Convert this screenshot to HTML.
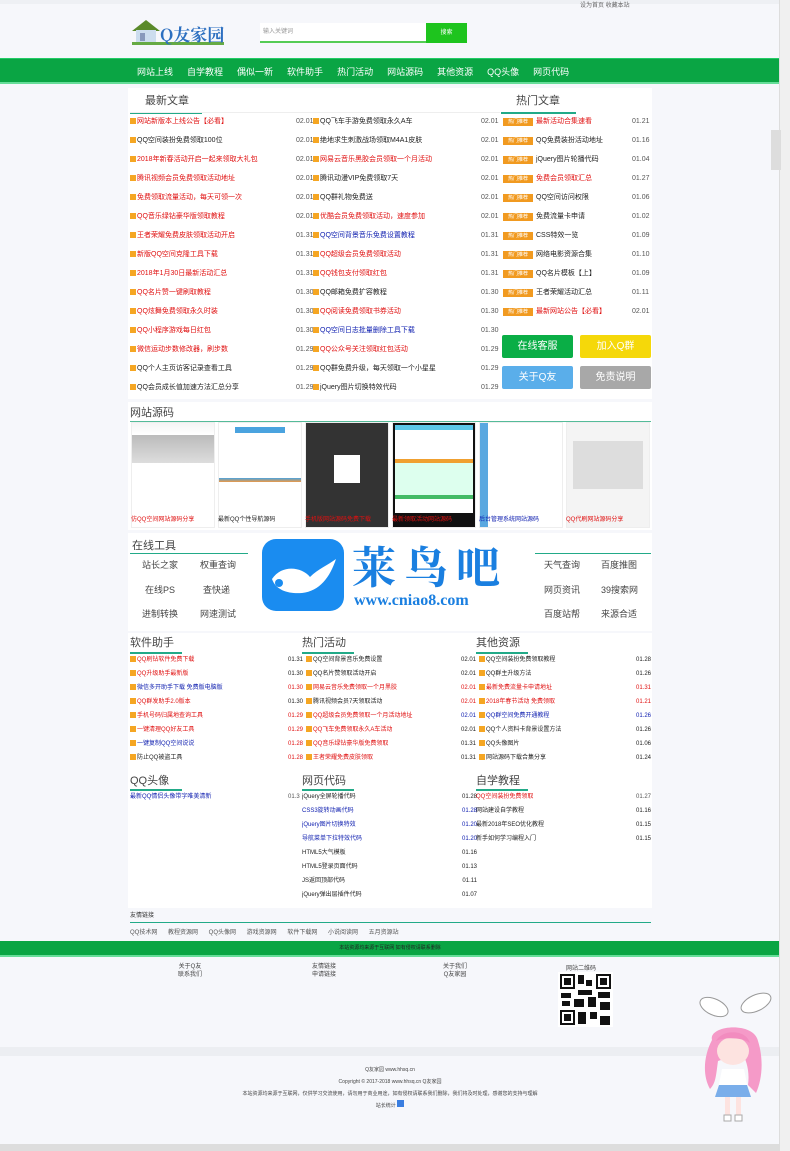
<!DOCTYPE html>
<html><head><meta charset="utf-8"><style>
*{margin:0;padding:0;box-sizing:border-box}
body{width:790px;height:1151px;background:#f6f7fb;font-family:"Liberation Sans","Noto Sans CJK SC",sans-serif;font-size:7px;color:#333;position:relative;overflow:hidden}
.a{position:absolute}
.nav{left:0;top:58px;width:780px;height:26px;background:#0aa544;border-top:1px solid #2c6;border-bottom:2px solid #6d9;white-space:nowrap}
.nav span{color:#fff;font-size:9px;display:inline-block;margin-left:14px;line-height:26px}
.box{background:#fff}
.ttl{font-size:11px;color:#444}
.ul{border-bottom:2px solid #2a8;width:70px}
.row{height:19px;line-height:19px;white-space:nowrap;overflow:hidden}
.r{color:#e01010}.b{color:#1020b0}.k{color:#222}
.ic{display:inline-block;width:6px;height:6px;background:#f5a623;margin-right:1px;vertical-align:-1px}
.dt{color:#555}
.tag{display:inline-block;background:#f19a20;color:#fff;width:30px;height:8px;line-height:8px;font-size:5px;text-align:center;vertical-align:0;margin-right:3px}
.sr{height:14px;line-height:14px;white-space:nowrap;overflow:hidden;font-size:6px}
.btn{color:#fff;font-size:10px;text-align:center;line-height:23px;border-radius:2px;width:71px;height:23px}
.thumb{top:422px;width:84px;height:106px;background:#fff;border:1px solid #eee}
.tool span{position:absolute;font-size:9px;color:#444;white-space:nowrap}
</style></head><body>
<div class="a" style="left:0;top:0;width:780px;height:4px;background:#eef0f4"></div>
<div class="a" style="left:130px;top:17px;width:98px;height:30px">
<svg width="98" height="30"><path d="M2 14 L16 3 L30 14 Z" fill="#5a8a2a"/><rect x="6" y="13" width="20" height="12" fill="#cde"/><rect x="10" y="16" width="5" height="8" fill="#89b"/><rect x="2" y="25" width="92" height="3" fill="#6a4"/></svg>
<span class="a" style="left:30px;top:4px;font-size:17px;color:#2c6fc0;font-weight:bold;font-family:'Noto Serif CJK SC',serif">Q友家园</span></div>
<div class="a" style="left:260px;top:23px;width:166px;height:20px;background:#fff;border-bottom:2px solid #5c5;font-size:6px;color:#999;line-height:18px;padding-left:3px">输入关键词</div>
<div class="a" style="left:426px;top:23px;width:41px;height:20px;background:#1ec41e;color:#fff;font-size:6px;text-align:center;line-height:20px">搜索</div>
<div class="a" style="left:580px;top:0;font-size:6px;color:#666">设为首页 收藏本站</div>
<div class="a nav"><span style="margin-left:137px">网站上线</span><span>自学教程</span><span>偶似一新</span><span>软件助手</span><span>热门活动</span><span>网站源码</span><span>其他资源</span><span>QQ头像</span><span>网页代码</span></div>
<div class="a box" style="left:128px;top:88px;width:524px;height:311px"></div>
<div class="a ttl" style="left:145px;top:92px">最新文章</div>
<div class="a ul" style="left:130px;top:112px;width:72px"></div>
<div class="a" style="left:130px;top:112px;width:370px;border-bottom:1px solid #eee"></div>
<div class="a" style="left:130px;top:112px;width:165px">
<div class="row r"><span class="ic"></span>网站新版本上线公告【必看】</div>
<div class="row k"><span class="ic"></span>QQ空间装扮免费领取100位</div>
<div class="row r"><span class="ic"></span>2018年新春活动开启一起来领取大礼包</div>
<div class="row r"><span class="ic"></span>腾讯视频会员免费领取活动地址</div>
<div class="row r"><span class="ic"></span>免费领取流量活动，每天可领一次</div>
<div class="row r"><span class="ic"></span>QQ音乐绿钻豪华版领取教程</div>
<div class="row r"><span class="ic"></span>王者荣耀免费皮肤领取活动开启</div>
<div class="row r"><span class="ic"></span>新版QQ空间克隆工具下载</div>
<div class="row r"><span class="ic"></span>2018年1月30日最新活动汇总</div>
<div class="row r"><span class="ic"></span>QQ名片赞一键刷取教程</div>
<div class="row r"><span class="ic"></span>QQ炫舞免费领取永久时装</div>
<div class="row r"><span class="ic"></span>QQ小程序游戏每日红包</div>
<div class="row r"><span class="ic"></span>微信运动步数修改器，刷步数</div>
<div class="row k"><span class="ic"></span>QQ个人主页访客记录查看工具</div>
<div class="row k"><span class="ic"></span>QQ会员成长值加速方法汇总分享</div></div>
<div class="a dt" style="left:296px;top:112px;line-height:19px">02.01<br>02.01<br>02.01<br>02.01<br>02.01<br>02.01<br>01.31<br>01.31<br>01.31<br>01.30<br>01.30<br>01.30<br>01.29<br>01.29<br>01.29</div>
<div class="a" style="left:313px;top:112px;width:165px">
<div class="row k"><span class="ic"></span>QQ飞车手游免费领取永久A车</div>
<div class="row k"><span class="ic"></span>绝地求生刺激战场领取M4A1皮肤</div>
<div class="row r"><span class="ic"></span>网易云音乐黑胶会员领取一个月活动</div>
<div class="row k"><span class="ic"></span>腾讯动漫VIP免费领取7天</div>
<div class="row k"><span class="ic"></span>QQ群礼物免费送</div>
<div class="row r"><span class="ic"></span>优酷会员免费领取活动，速度参加</div>
<div class="row b"><span class="ic"></span>QQ空间背景音乐免费设置教程</div>
<div class="row r"><span class="ic"></span>QQ超级会员免费领取活动</div>
<div class="row r"><span class="ic"></span>QQ钱包支付领取红包</div>
<div class="row k"><span class="ic"></span>QQ邮箱免费扩容教程</div>
<div class="row r"><span class="ic"></span>QQ阅读免费领取书券活动</div>
<div class="row b"><span class="ic"></span>QQ空间日志批量删除工具下载</div>
<div class="row r"><span class="ic"></span>QQ公众号关注领取红包活动</div>
<div class="row k"><span class="ic"></span>QQ群免费升级，每天领取一个小星星</div>
<div class="row k"><span class="ic"></span>jQuery图片切换特效代码</div></div>
<div class="a dt" style="left:481px;top:112px;line-height:19px">02.01<br>02.01<br>02.01<br>02.01<br>02.01<br>02.01<br>01.31<br>01.31<br>01.31<br>01.30<br>01.30<br>01.30<br>01.29<br>01.29<br>01.29</div>
<div class="a ttl" style="left:516px;top:92px">热门文章</div>
<div class="a ul" style="left:501px;top:112px;width:75px"></div>
<div class="a" style="left:503px;top:112px;width:148px;line-height:19px">
<div class="row r"><span class="tag">热门推荐</span>最新活动合集速看</div>
<div class="row k"><span class="tag">热门推荐</span>QQ免费装扮活动地址</div>
<div class="row k"><span class="tag">热门推荐</span>jQuery图片轮播代码</div>
<div class="row r"><span class="tag">热门推荐</span>免费会员领取汇总</div>
<div class="row k"><span class="tag">热门推荐</span>QQ空间访问权限</div>
<div class="row k"><span class="tag">热门推荐</span>免费流量卡申请</div>
<div class="row k"><span class="tag">热门推荐</span>CSS特效一览</div>
<div class="row k"><span class="tag">热门推荐</span>网络电影资源合集</div>
<div class="row k"><span class="tag">热门推荐</span>QQ名片模板【上】</div>
<div class="row k"><span class="tag">热门推荐</span>王者荣耀活动汇总</div>
<div class="row r"><span class="tag">热门推荐</span>最新网站公告【必看】</div></div>
<div class="a" style="left:632px;top:112px;line-height:19px;color:#555">01.21<br>01.16<br>01.04<br>01.27<br>01.06<br>01.02<br>01.09<br>01.10<br>01.09<br>01.11<br>02.01</div>
<div class="a btn" style="left:502px;top:335px;background:#0aae46">在线客服</div>
<div class="a btn" style="left:580px;top:335px;background:#f5d80a">加入Q群</div>
<div class="a btn" style="left:502px;top:366px;background:#5aaeea">关于Q友</div>
<div class="a btn" style="left:580px;top:366px;background:#a8a8a8">免责说明</div>
<div class="a box" style="left:128px;top:402px;width:524px;height:128px"></div>
<div class="a ttl" style="left:130px;top:404px">网站源码</div>
<div class="a" style="left:130px;top:421px;width:521px;border-top:1px solid #5b9"></div>
<div class="a thumb" style="left:131px;background:linear-gradient(#f5f5f5 0,#fff 12px,#bbb 12px,#ddd 40px,#fff 40px)"></div>
<div class="a thumb" style="left:218px;background:linear-gradient(#fff 55px,#4aa3df 55px,#e94 59px,#fff 59px)"><div style="margin:4px 16px;height:6px;background:#4aa3df"></div></div>
<div class="a thumb" style="left:305px;background:#333"><div style="margin:32px 28px;height:28px;background:#fff"></div></div>
<div class="a thumb" style="left:392px;background:#111;padding:2px"><div style="height:88px;background:linear-gradient(#5cc8e8 0,#5cc8e8 5px,#fff 5px,#fff 34px,#f0a030 34px,#f0a030 38px,#dfe 38px,#dfe 70px,#4b6 70px,#4b6 74px,#fff 74px)"></div></div>
<div class="a thumb" style="left:479px;background:linear-gradient(90deg,#5aa8e0 0,#5aa8e0 8px,#fff 8px)"></div>
<div class="a thumb" style="left:566px;background:#f4f4f4"><div style="margin:18px 6px;height:48px;background:#ddd"></div></div>
<div class="a" style="left:131px;top:514px;width:520px;font-size:6px;white-space:nowrap"><span class="r" style="position:absolute;left:0">仿QQ空间网站源码分享</span><span class="k" style="position:absolute;left:87px">最新QQ个性导航源码</span><span class="r" style="position:absolute;left:174px">手机版网站源码免费下载</span><span class="r" style="position:absolute;left:261px">最新领取活动网站源码</span><span class="b" style="position:absolute;left:348px">后台管理系统网站源码</span><span class="r" style="position:absolute;left:435px">QQ代刷网站源码分享</span></div>
<div class="a box" style="left:128px;top:533px;width:524px;height:98px"></div>
<div class="a ttl" style="left:132px;top:537px">在线工具</div>
<div class="a" style="left:130px;top:553px;width:118px;border-top:1px solid #2a8"></div>
<div class="a" style="left:535px;top:553px;width:116px;border-top:1px solid #2a8"></div>
<div class="a tool" style="left:0;top:0;width:790px;height:700px"><span style="left:142px;top:558px">站长之家</span><span style="left:200px;top:558px">权重查询</span><span style="left:145px;top:583px">在线PS</span><span style="left:203px;top:583px">查快递</span><span style="left:142px;top:607px">进制转换</span><span style="left:200px;top:607px">网速测试</span><span style="left:544px;top:558px">天气查询</span><span style="left:601px;top:558px">百度推图</span><span style="left:544px;top:583px">网页资讯</span><span style="left:601px;top:583px">39搜索网</span><span style="left:544px;top:607px">百度站帮</span><span style="left:601px;top:607px">来源合适</span></div>
<div class="a" style="left:262px;top:539px;width:82px;height:72px;background:#1a8cf0;border-radius:14px"><svg width="82" height="72"><path d="M10 40 C20 25 40 28 48 38 C56 30 66 26 74 20 C68 38 58 52 40 54 C28 55 14 52 10 40 Z" fill="#fff"/><circle cx="17" cy="44" r="4" fill="#1a8cf0"/></svg></div>
<div class="a" style="left:352px;top:534px;font-size:44px;color:#1a7fe0;font-weight:bold;font-family:'Noto Serif CJK SC',serif;letter-spacing:8px;line-height:60px;white-space:nowrap">莱鸟吧</div>
<div class="a" style="left:354px;top:592px;font-size:16px;color:#1a7fe0;font-weight:bold;font-family:'Liberation Serif',serif">www.cniao8.com</div>
<div class="a box" style="left:128px;top:633px;width:524px;height:275px"></div>
<div class="a ttl" style="left:130px;top:634px">软件助手</div><div class="a ul" style="left:130px;top:652px;width:52px"></div>
<div class="a ttl" style="left:302px;top:634px">热门活动</div><div class="a ul" style="left:302px;top:652px;width:52px"></div>
<div class="a ttl" style="left:476px;top:634px">其他资源</div><div class="a ul" style="left:476px;top:652px;width:52px"></div>
<div class="a" style="left:130px;top:653px;width:150px">
<div class="sr r"><span class="ic"></span>QQ刷钻软件免费下载</div><div class="sr r"><span class="ic"></span>QQ升级助手最新版</div><div class="sr b"><span class="ic"></span>微信多开助手下载 免费版电脑版</div><div class="sr r"><span class="ic"></span>QQ群发助手2.0版本</div><div class="sr r"><span class="ic"></span>手机号码归属地查询工具</div><div class="sr r"><span class="ic"></span>一键清理QQ好友工具</div><div class="sr b"><span class="ic"></span>一键复制QQ空间说说</div><div class="sr k"><span class="ic"></span>防止QQ被盗工具</div></div>
<div class="a" style="left:288px;top:653px;width:180px;font-size:6px">
<div class="sr k">01.31<span class="ic" style="margin-left:3px"></span>QQ空间背景音乐免费设置</div><div class="sr k">01.30<span class="ic" style="margin-left:3px"></span>QQ名片赞领取活动开启</div><div class="sr r">01.30<span class="ic" style="margin-left:3px"></span>网易云音乐免费领取一个月黑胶</div><div class="sr k">01.30<span class="ic" style="margin-left:3px"></span>腾讯视频会员7天领取活动</div><div class="sr r">01.29<span class="ic" style="margin-left:3px"></span>QQ超级会员免费领取一个月活动地址</div><div class="sr r">01.29<span class="ic" style="margin-left:3px"></span>QQ飞车免费领取永久A车活动</div><div class="sr r">01.28<span class="ic" style="margin-left:3px"></span>QQ音乐绿钻豪华版免费领取</div><div class="sr r">01.28<span class="ic" style="margin-left:3px"></span>王者荣耀免费皮肤领取</div></div>
<div class="a" style="left:461px;top:653px;width:190px;font-size:6px">
<div class="sr k">02.01<span class="ic" style="margin-left:3px"></span>QQ空间装扮免费领取教程 <span style="float:right">01.28</span></div><div class="sr k">02.01<span class="ic" style="margin-left:3px"></span>QQ群主升级方法 <span style="float:right">01.26</span></div><div class="sr r">02.01<span class="ic" style="margin-left:3px"></span>最新免费流量卡申请地址 <span style="float:right">01.31</span></div><div class="sr r">02.01<span class="ic" style="margin-left:3px"></span>2018年春节活动 免费领取 <span style="float:right">01.21</span></div><div class="sr b">02.01<span class="ic" style="margin-left:3px"></span>QQ群空间免费开通教程 <span style="float:right">01.26</span></div><div class="sr k">02.01<span class="ic" style="margin-left:3px"></span>QQ个人资料卡背景设置方法 <span style="float:right">01.26</span></div><div class="sr k">01.31<span class="ic" style="margin-left:3px"></span>QQ头像图片 <span style="float:right">01.06</span></div><div class="sr k">01.31<span class="ic" style="margin-left:3px"></span>网站源码下载合集分享 <span style="float:right">01.24</span></div></div>
<div class="a ttl" style="left:130px;top:772px">QQ头像</div><div class="a ul" style="left:130px;top:789px;width:52px"></div>
<div class="a ttl" style="left:302px;top:772px">网页代码</div><div class="a ul" style="left:302px;top:789px;width:52px"></div>
<div class="a ttl" style="left:476px;top:772px">自学教程</div><div class="a ul" style="left:476px;top:789px;width:52px"></div>
<div class="a sr b" style="left:130px;top:790px;width:170px">最新QQ情侣头像带字唯美清新 <span style="position:absolute;left:158px;color:#555">01.31</span></div>
<div class="a" style="left:302px;top:790px;width:175px;font-size:6px">
<div class="sr k">jQuery全屏轮播代码 <span style="float:right">01.28</span></div><div class="sr b">CSS3旋转动画代码 <span style="float:right">01.28</span></div><div class="sr b">jQuery图片切换特效 <span style="float:right">01.20</span></div><div class="sr b">导航菜单下拉特效代码 <span style="float:right">01.20</span></div><div class="sr k">HTML5大气模板 <span style="float:right">01.16</span></div><div class="sr k">HTML5登录页面代码 <span style="float:right">01.13</span></div><div class="sr k">JS返回顶部代码 <span style="float:right">01.11</span></div><div class="sr k">jQuery弹出层插件代码 <span style="float:right">01.07</span></div></div>
<div class="a" style="left:476px;top:790px;width:175px;font-size:6px">
<div class="sr r">QQ空间装扮免费领取 <span style="float:right;color:#555">01.27</span></div><div class="sr k">网站建设自学教程 <span style="float:right">01.16</span></div><div class="sr k">最新2018年SEO优化教程 <span style="float:right">01.15</span></div><div class="sr k">新手如何学习编程入门 <span style="float:right">01.15</span></div></div>
<div class="a" style="left:130px;top:910px;font-size:6px;color:#333">友情链接</div>
<div class="a" style="left:130px;top:922px;width:521px;border-top:1px solid #2a8"></div>
<div class="a" style="left:130px;top:927px;font-size:6px;color:#555;word-spacing:9px;white-space:nowrap">QQ技术网 教程资源网 QQ头像网 游戏资源网 软件下载网 小说阅读网 五月资源站</div>
<div class="a" style="left:0;top:941px;width:780px;height:16px;background:#0aa544;border-bottom:2px solid #6d9;text-align:center;font-size:5px;color:#222;line-height:15px">本站资源均来源于互联网 如有侵权请联系删除</div>
<div class="a" style="left:178px;top:963px;font-size:6px;color:#444;text-align:center;line-height:8px">关于Q友<br>联系我们</div>
<div class="a" style="left:312px;top:963px;font-size:6px;color:#444;text-align:center;line-height:8px">友情链接<br>申请链接</div>
<div class="a" style="left:443px;top:963px;font-size:6px;color:#444;text-align:center;line-height:8px">关于我们<br>Q友家园</div>
<div class="a" style="left:566px;top:963px;font-size:6px;color:#444">网站二维码</div>
<div class="a" style="left:558px;top:972px;width:55px;height:55px;background:#fff">
<svg width="55" height="55"><g fill="#111"><rect x="2" y="2" width="15" height="15"/><rect x="38" y="2" width="15" height="15"/><rect x="2" y="38" width="15" height="15"/></g><g fill="#fff"><rect x="4" y="4" width="11" height="11"/><rect x="40" y="4" width="11" height="11"/><rect x="4" y="40" width="11" height="11"/></g><g fill="#111"><rect x="6" y="6" width="7" height="7"/><rect x="42" y="6" width="7" height="7"/><rect x="6" y="42" width="7" height="7"/><rect x="20" y="3" width="6" height="9"/><rect x="28" y="8" width="6" height="6"/><rect x="20" y="18" width="14" height="5"/><rect x="3" y="21" width="10" height="5"/><rect x="16" y="27" width="10" height="8"/><rect x="30" y="25" width="8" height="10"/><rect x="40" y="20" width="12" height="6"/><rect x="42" y="30" width="10" height="8"/><rect x="20" y="40" width="8" height="12"/><rect x="32" y="40" width="7" height="7"/><rect x="42" y="44" width="10" height="9"/><rect x="4" y="29" width="8" height="5"/></g></svg></div>
<div class="a" style="left:0;top:1047px;width:780px;height:9px;background:#eceef2"></div>
<div class="a" style="left:0;top:1064px;width:780px;text-align:center;font-size:5px;color:#444;line-height:12px">Q友家园 www.hhsq.cn<br>Copyright © 2017-2018 www.hhsq.cn Q友家园<br>本站资源均来源于互联网，仅供学习交流使用，请勿用于商业用途，如有侵权请联系我们删除，我们将及时处理，感谢您的支持与理解<br>站长统计 <span style="display:inline-block;width:7px;height:7px;background:#3a7ee0"></span></div>
<div class="a" style="left:688px;top:985px;width:95px;height:160px">
<svg width="95" height="160"><ellipse cx="26" cy="22" rx="15" ry="8" fill="#fff" stroke="#999" transform="rotate(25 26 22)"/><ellipse cx="68" cy="18" rx="16" ry="8" fill="#fff" stroke="#999" transform="rotate(-25 68 18)"/><path d="M24 55 C20 40 66 36 70 56 C76 75 74 95 68 108 L60 100 C62 86 58 74 54 68 L30 76 C28 90 28 98 22 104 C14 90 16 70 24 55 Z" fill="#f59ac8"/><ellipse cx="45" cy="66" rx="16" ry="14" fill="#fde3e0"/><path d="M28 56 C34 44 58 44 62 58 C54 52 36 52 28 56 Z" fill="#f28cbf"/><path d="M34 84 L56 84 L60 104 L30 104 Z" fill="#fff"/><path d="M31 100 L59 100 L63 112 L27 112 Z" fill="#7aaeea"/><rect x="37" y="112" width="5" height="20" fill="#fde3e0"/><rect x="48" y="112" width="5" height="20" fill="#fde3e0"/><rect x="36" y="130" width="7" height="6" fill="#fff" stroke="#aaa"/><rect x="47" y="130" width="7" height="6" fill="#fff" stroke="#aaa"/></svg></div>
<div class="a" style="left:779px;top:0;width:11px;height:1151px;background:#f0f0f0;border-left:1px solid #ddd"></div>
<div class="a" style="left:771px;top:130px;width:10px;height:40px;background:#ddd"></div>
<div class="a" style="left:0;top:1144px;width:779px;height:7px;background:#ddd"></div>
</body></html>
